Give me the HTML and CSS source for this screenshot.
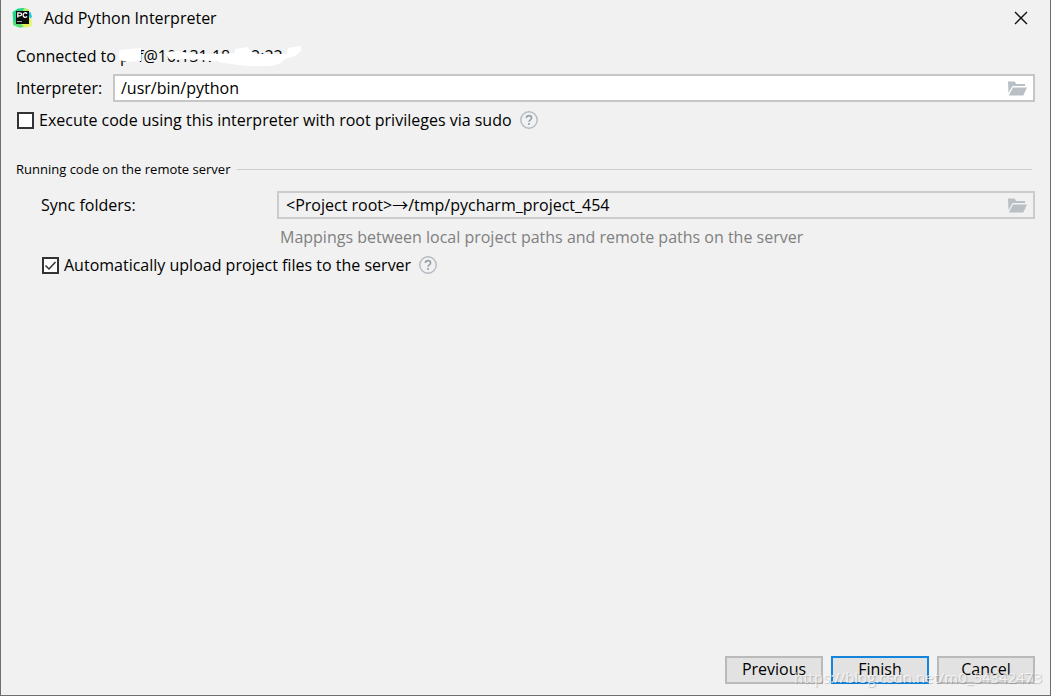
FILE: index.html
```html
<!DOCTYPE html>
<html lang="en">
<head>
    <meta charset="UTF-8">
    <meta name="viewport" content="width=device-width, initial-scale=1.0">
    <title>Add Python Interpreter</title>
    <link rel="stylesheet" href="styles.css">
</head>
<body>
    <svg class="symbols" aria-hidden="true">
        <symbol id="folder" viewBox="0 0 19 15">
            <path d="M0 0.5H6.5L8.3 3H17V5H4.5L0.5 12Z" fill="#b8bfc5"/>
            <path d="M5 6.5H19L15.3 14.5H0.8Z" fill="#b8bfc5"/>
        </symbol>
        <symbol id="help" viewBox="0 0 18 18">
            <circle cx="9" cy="9" r="8.2" fill="none" stroke="#b3bbc2" stroke-width="1.4"/>
            <path d="M6.4 7C6.4 3.8 11.6 3.8 11.6 7C11.6 8.8 9 8.8 9 10.8" fill="none" stroke="#98a1a8" stroke-width="1.6"/>
            <rect x="8.1" y="12" width="1.8" height="1.8" fill="#98a1a8"/>
        </symbol>
    </svg>

    <div class="dialog">
        <header class="titlebar">
            <svg class="logo" viewBox="0 0 20 20" aria-hidden="true">
                <path d="M0.5 4L6 0.5L12 0L17 2L15 18L8 19.5L1.5 17Z" fill="#21d789"/>
                <path d="M15 5L18.5 4L20 9L17 12Z" fill="#14c9ef"/>
                <path d="M17 8L19.5 12V18L14 19.5L5 18L9 15Z" fill="#e3f45b"/>
                <path d="M12 0L17.5 2L16 7L11 3Z" fill="#b9ee60"/>
                <path d="M0.5 13L8 15L12 19L7 19.5L1.5 17Z" fill="#59df78"/>
                <rect x="4" y="3" width="13" height="13" fill="#0b0b0b"/>
                <path d="M5.8 9.5V4.8H7.8C10.2 4.8 10.2 7.8 7.8 7.8H6M15.2 5.6C13 3.8 11.1 5.3 11.1 7.1C11.1 9 13 10.3 15.2 8.6" fill="none" stroke="#fff" stroke-width="1.3"/>
                <rect x="5" y="13" width="5" height="1" fill="#aaa"/>
            </svg>
            <h1>Add Python Interpreter</h1>
            <button class="close" type="button" aria-label="Close">
                <svg viewBox="0 0 14 14"><path d="M1 1L13 13M13 1L1 13" stroke="#111" stroke-width="1.4"/></svg>
            </button>
        </header>

        <form class="content">
            <div class="connection">
                <span>Connected to</span>
                <span class="host">p&nbsp;&nbsp;f@10.131.18.&nbsp;&nbsp;&nbsp;&nbsp;2:22
                    <svg class="scribble" viewBox="0 0 184 26" aria-hidden="true">
                        <path d="M0 5L22 3V16L8 17L0 15ZM46 7L58 6L76 9L100 9L116 8V4L128 2L134 8L142 9L168 9L169 3L181 1Q185 5 176 11L166 14Q162 20 150 21L128 21L112 19L92 16L74 14L50 14Z" fill="#fff"/>
                    </svg>
                </span>
            </div>

            <div class="row">
                <label for="interpreter">Interpreter:</label>
                <div class="field">
                    <input type="text" id="interpreter" value="/usr/bin/python">
                    <button class="browse" type="button" aria-label="Browse interpreter"><svg><use href="#folder"/></svg></button>
                </div>
            </div>

            <div class="check">
                <input type="checkbox" id="sudo">
                <label for="sudo">Execute code using this interpreter with root privileges via sudo</label>
                <button class="help" type="button" aria-label="Help"><svg><use href="#help"/></svg></button>
            </div>

            <div class="separator">
                <h2>Running code on the remote server</h2>
            </div>

            <div class="sync">
                <label for="folders">Sync folders:</label>
                <div class="field readonly">
                    <input type="text" id="folders" value="&lt;Project root&gt;→/tmp/pycharm_project_454" readonly>
                    <button class="browse" type="button" aria-label="Browse folders"><svg><use href="#folder"/></svg></button>
                </div>
                <p class="hint">Mappings between local project paths and remote paths on the server</p>
            </div>

            <div class="check indent">
                <input type="checkbox" id="upload" checked>
                <label for="upload">Automatically upload project files to the server</label>
                <button class="help" type="button" aria-label="Help"><svg><use href="#help"/></svg></button>
            </div>
        </form>

        <footer class="buttons">
            <button type="button">Previous</button>
            <button class="primary" type="button">Finish</button>
            <button type="button">Cancel</button>
            <span class="watermark">https://blog.csdn.net/m0_54342473</span>
        </footer>
    </div>
</body>
</html>
```
FILE: styles.css
```css
* {
    box-sizing: border-box;
}

body {
    margin: 0;
    background-color: #f1f1f1;
    color: #000;
    font-family: "Open Sans", "Noto Sans CJK SC", sans-serif;
    font-size: 16px;
    line-height: 20px;
}

h1, h2, p {
    margin: 0;
    font-weight: normal;
}

button, input {
    font: inherit;
    color: inherit;
}

.symbols {
    position: absolute;
    width: 0;
    height: 0;
}

.dialog {
    display: flex;
    flex-direction: column;
    min-height: 100vh;
    border: 1px solid #6e6e6e;
    border-top: none;
}

.titlebar {
    display: flex;
    align-items: center;
    height: 36px;
    padding: 0 22px 0 11px;
}

.titlebar h1 {
    flex: 1;
    font-size: 16px;
}

.logo {
    width: 20px;
    height: 20px;
    margin-right: 12px;
}

.close, .browse, .help {
    display: flex;
    padding: 0;
    border: none;
    background: none;
}

.close svg {
    width: 14px;
    height: 14px;
}

.content {
    flex: 1;
    padding: 10px 15px 0;
}

.connection {
    display: flex;
    gap: 4px;
}

.host {
    position: relative;
    white-space: nowrap;
}

.scribble {
    position: absolute;
    left: -1px;
    top: -1px;
    width: 184px;
    height: 26px;
}

.row {
    display: flex;
    align-items: center;
    margin-top: 8px;
}

.row label {
    width: 97px;
}

.field {
    display: flex;
    flex: 1;
    align-items: center;
    height: 28px;
    padding: 0 6px;
    border: 2px solid #c6c6c6;
    background-color: #fff;
}

.field input {
    flex: 1;
    min-width: 0;
    padding: 0;
    border: none;
    outline: none;
    background: none;
}

.field.readonly {
    padding-left: 7px;
    border-color: #cccccc;
    background-color: #f1f1f1;
}

.browse svg {
    width: 19px;
    height: 15px;
}

.check {
    display: flex;
    align-items: center;
    height: 20px;
    margin-top: 8px;
}

.check input {
    appearance: none;
    width: 17px;
    height: 17px;
    margin: 0 5px 0 1px;
    border: 2px solid #333;
    background-color: #fff;
}

.check input:checked {
    background-image: url("data:image/svg+xml,%3Csvg xmlns='http://www.w3.org/2000/svg' viewBox='0 0 13 13'%3E%3Cpath d='M1.5 6.5L5 10L11.5 3' fill='none' stroke='%23333' stroke-width='1.5'/%3E%3C/svg%3E");
}

.help {
    margin-left: 8px;
}

.help svg {
    width: 18px;
    height: 18px;
}

.separator {
    display: flex;
    align-items: center;
    gap: 7px;
    margin: 29px 3px 0 0;
}

.separator h2 {
    font-size: 13px;
    line-height: 20px;
}

.separator::after {
    content: "";
    flex: 1;
    height: 1px;
    background-color: #cdcdcd;
}

.sync {
    display: grid;
    grid-template-columns: 236px 1fr;
    align-items: center;
    row-gap: 8px;
    margin: 12px 0 0 25px;
}

.hint {
    grid-column: 2;
    padding-left: 3px;
    color: #808080;
}

.indent {
    margin: 8px 0 0 25px;
}

.buttons {
    position: relative;
    display: flex;
    justify-content: flex-end;
    gap: 8px;
    padding: 0 15px 11px;
}

.buttons button {
    width: 98px;
    height: 28px;
    padding: 0 0 2px;
    border: 2px solid #bababa;
    background-color: #e2e2e2;
}

.buttons .primary {
    border-color: #1585dc;
}

.watermark {
    position: absolute;
    right: 8px;
    bottom: 8px;
    color: rgba(255, 255, 255, 0.7);
    font-size: 15px;
    text-shadow: 1px 1px 1px rgba(0, 0, 0, 0.2);
    pointer-events: none;
}
```
